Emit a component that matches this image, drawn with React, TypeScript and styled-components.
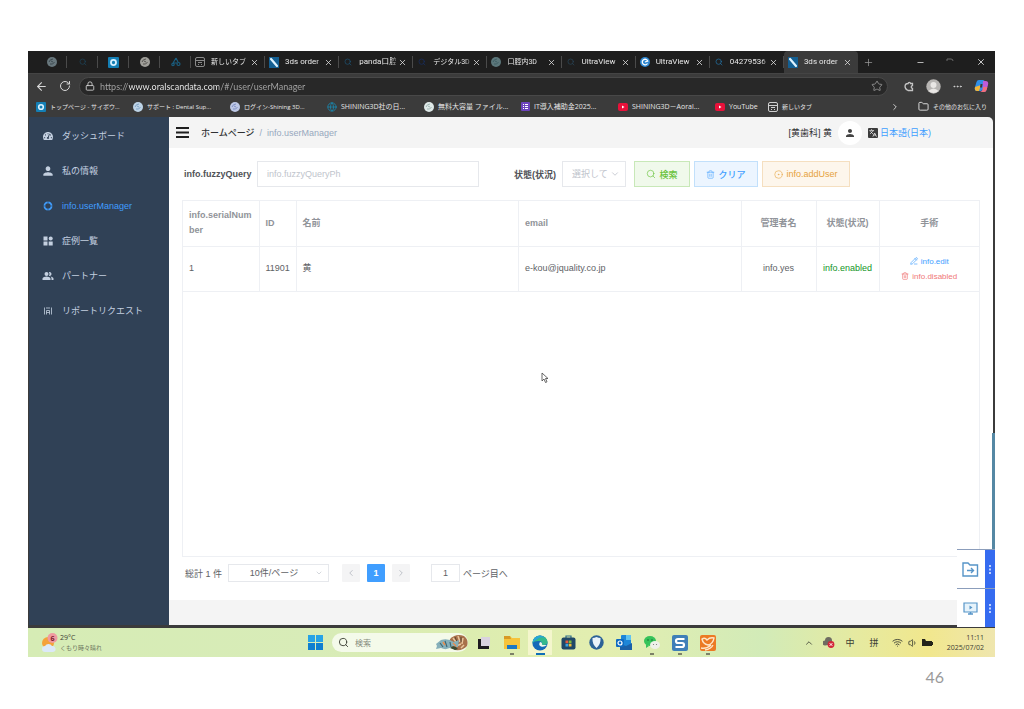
import React from "react";
import styled, { createGlobalStyle, css } from "styled-components";
import {
  ArrowLeft, RotateCw, Lock, Star, X, Plus, Minus, Search, ChevronDown, ChevronLeft,
  ChevronRight, ChevronUp, Folder, Trash2, CircleDot, PencilLine, Wifi, Volume1, Ellipsis,
  Globe, Languages,
} from "lucide-react";
import { FaTachometerAlt } from "react-icons/fa";
import { MdPerson, MdPeopleAlt } from "react-icons/md";

const uiFont = `"Open Sans", "Noto Sans CJK JP", sans-serif`;
const narrowFont = `Roboto, "Noto Sans CJK JP", sans-serif`;
const appFont = `"Liberation Sans", "Noto Sans CJK JP", sans-serif`;

const GlobalStyle = createGlobalStyle`
  *, *::before, *::after { box-sizing: border-box; }
  body { margin: 0; background: #fff; font-family: ${appFont}; font-size: 9px; }
  button, input, select { font: inherit; margin: 0; padding: 0; border: 0; background: none; color: inherit; }
  button { cursor: pointer; }
  a { color: inherit; text-decoration: none; }
  svg { display: block; flex: none; }
`;

const Slide = styled.div`
  min-height: 100vh;
  display: flex;
  flex-direction: column;
  padding: 51px 29px 0 28px;
`;

const Desktop = styled.div`
  position: relative;
  flex: 1;
  display: flex;
  flex-direction: column;
  background: #3b3b3b;
`;

const SlideNumber = styled.footer`
  height: 52px;
  padding: 10px 51px 0 0;
  text-align: right;
  font: 16px/20px Lato, sans-serif;
  color: #9a9a9a;
`;

/* ---------- browser chrome ---------- */

const TabStrip = styled.div`
  display: flex;
  height: 22px;
  background: #1e1e1e;
  color: #e8e8e8;
  font-family: ${narrowFont};
`;

const PinnedTabs = styled.div`
  display: flex;
  padding-left: 8px;
`;

const PinnedTab = styled.button`
  display: grid;
  place-items: center;
  width: 31px;
  background: linear-gradient(#4a4a4a, #4a4a4a) right center / 1px 12px no-repeat;
`;

const Tabs = styled.div`
  flex: 1;
  min-width: 0;
  display: flex;
`;

const Tab = styled.div<{ $active?: boolean }>`
  flex: 1;
  min-width: 0;
  display: flex;
  align-items: center;
  padding: 0 6px 0 4px;
  border-radius: 4px 4px 0 0;
  background: ${p => p.$active ? "#3b3b3b" : "linear-gradient(#4a4a4a, #4a4a4a) right center / 1px 12px no-repeat"};
`;

const TabIcon = styled.span`
  display: grid;
  place-items: center;
  width: 10px;
`;

const TabTitle = styled.span<{ $small?: boolean }>`
  flex: 1;
  min-width: 0;
  margin: 0 2px 0 6px;
  overflow: hidden;
  white-space: nowrap;
  font-size: ${p => p.$small ? 7 : 8}px;
  line-height: 12px;
  mask-image: linear-gradient(90deg, #000 85%, #0006);
`;

const WindowControls = styled.div`
  width: 137px;
  display: flex;
  align-items: center;
  justify-content: space-between;
  padding: 0 9px 0 5px;
  svg:first-child { margin-right: 20px; }
`;

const NavBar = styled.div`
  display: flex;
  align-items: center;
  height: 25px;
  padding: 0 6px 0 7px;
  gap: 11px;
  color: #d8d8d8;
  border-top: 1px solid #444;
`;

const AddressBox = styled.label`
  flex: 1;
  display: flex;
  align-items: center;
  gap: 5px;
  height: 19px;
  margin: 0 5px 0 -3px;
  padding: 0 4px 0 5px;
  border: 1px solid #484848;
  border-radius: 10px;
  background: #282828;
`;

const AddressInput = styled.input`
  flex: 1;
  min-width: 0;
  height: 15px;
  outline: 0;
  font: 9px/15px Lato, sans-serif;
  color: transparent;
  background: linear-gradient(90deg, #a8a8a8 28px, #f4f4f4 28px 119px, #a8a8a8 119px);
  background-clip: text;
`;

const BookmarkBar = styled.nav`
  display: flex;
  align-items: center;
  height: 19px;
  padding: 0 8px 2px;
  color: #e6e6e6;
  font-family: ${uiFont};
`;

const Bookmark = styled.a<{ $w?: number; $small?: boolean }>`
  display: flex;
  align-items: center;
  gap: 4px;
  width: ${p => p.$w ? `${p.$w}px` : "auto"};
  font-size: ${p => p.$small ? 6 : 7}px;
  line-height: 12px;
  white-space: nowrap;
`;

const BookmarkEnd = styled.div`
  display: flex;
  align-items: center;
  gap: 18px;
  margin-left: auto;
`;

/* ---------- application ---------- */

const AppFrame = styled.div`
  flex: 1;
  display: flex;
  padding: 0 2px 3px 1px;
`;

const Sidebar = styled.nav`
  width: 140px;
  padding-top: 1px;
  background: #304156;
`;

const MenuLink = styled.a<{ $active?: boolean }>`
  display: flex;
  align-items: center;
  gap: 9px;
  height: 35px;
  padding-left: 14px;
  white-space: nowrap;
  color: ${p => p.$active ? "#409eff" : "#c4d0e0"};
`;

const MenuIcon = styled.span`
  display: flex;
  align-items: center;
  justify-content: center;
  width: 10px;
`;

const Main = styled.main`
  flex: 1;
  min-width: 0;
  display: flex;
  flex-direction: column;
  background: #f4f4f4;
  border-radius: 0 5px 0 0;
  overflow: hidden;
`;

const Header = styled.header`
  display: flex;
  align-items: center;
  height: 31px;
  padding: 0 62px 0 7px;
  color: #303133;
`;

const Crumbs = styled.nav`
  display: flex;
  align-items: center;
  gap: 5px;
  margin: 0 auto 0 12px;
  color: #97a8be;
  a { color: #303133; font-weight: 500; }
`;

const Avatar = styled.button`
  display: grid;
  place-items: center;
  width: 24px;
  height: 24px;
  margin: 0 6px;
  border-radius: 50%;
  background: #fff;
  color: #444;
`;

const LanguageLink = styled.a`
  display: flex;
  align-items: center;
  gap: 2px;
  color: #409eff;
  svg { background: #3d3d3d; color: #fff; border-radius: 1px; padding: 1px; }
`;

const Card = styled.section`
  flex: 1;
  display: flex;
  flex-direction: column;
  padding: 13px 13px 18px;
  background: #fff;
`;

const PageFoot = styled.div`
  height: 25px;
`;

const Filters = styled.form`
  display: flex;
  align-items: center;
  height: 26px;
  margin-bottom: 13px;
  padding-left: 2px;
`;

const FieldLabel = styled.label`
  width: 73px;
  font-weight: 700;
  color: #505257;
  white-space: nowrap;
`;

const StatusLabel = styled(FieldLabel)`
  width: 48px;
  margin-left: 35px;
`;

const QueryInput = styled.input`
  flex: 0 1 222px;
  min-width: 80px;
  height: 26px;
  padding: 0 9px;
  border: 1px solid #e6e8ec;
  background: #fff;
  &::placeholder { color: #c0c4cc; opacity: 1; }
`;

const SelectBox = styled.span<{ $w: number; $h: number }>`
  display: flex;
  align-items: center;
  justify-content: flex-end;
  width: ${p => p.$w}px;
  height: ${p => p.$h}px;
  padding-right: 5px;
  border: 1px solid #e6e8ec;
  background: #fff;
  color: #c0c4cc;
`;

const Select = styled.select<{ $center?: boolean }>`
  appearance: none;
  flex: 1;
  min-width: 0;
  height: 100%;
  padding-left: 9px;
  outline: 0;
  ${p => p.$center && css`padding-left: 4px; text-align: center; text-align-last: center; color: #606266;`}
`;

const tones = {
  green: ["#67c23a", "#f0f9eb", "#c8e8b8"],
  blue: ["#409eff", "#ecf5ff", "#c2e0fb"],
  amber: ["#e6a23c", "#fdf6ec", "#f5dfc0"],
};

const ActionButton = styled.button<{ $tone: keyof typeof tones; $w: number }>`
  display: flex;
  align-items: center;
  justify-content: center;
  gap: 3px;
  width: ${p => p.$w}px;
  height: 26px;
  margin-left: 4px;
  color: ${p => tones[p.$tone][0]};
  background: ${p => tones[p.$tone][1]};
  border: 1px solid ${p => tones[p.$tone][2]};
  font-weight: 500;
  white-space: nowrap;
`;

const Actions = styled.div`
  display: flex;
  margin-left: 4px;
`;

const TableBox = styled.div`
  flex: 1;
  border: 1px solid #eef0f4;
  margin-bottom: 7px;
`;

const Table = styled.table`
  width: 100%;
  table-layout: fixed;
  border-collapse: collapse;
  color: #606266;
  th, td {
    height: 45px;
    padding: 0 5px 0 6px;
    border-bottom: 1px solid #eef0f4;
    border-right: 1px solid #eef0f4;
    line-height: 15px;
    text-align: left;
    overflow-wrap: anywhere;
  }
  th:last-child, td:last-child { border-right: 0; }
  th { color: #909399; font-weight: 700; }
  th:nth-child(n + 5), td:nth-child(n + 5) { text-align: center; padding: 0; }
`;

const Enabled = styled.span`
  color: #13941f;
`;

const RowAction = styled.button<{ $danger?: boolean }>`
  display: flex;
  align-items: center;
  gap: 3px;
  margin: 0 auto;
  font-size: 8px;
  line-height: 15px;
  color: ${p => p.$danger ? "#f07878" : "#409eff"};
`;

const Pager = styled.div`
  display: flex;
  align-items: center;
  height: 18px;
  padding-left: 3px;
  color: #606266;
  white-space: nowrap;
`;

const PagerTotal = styled.span`
  width: 43px;
`;

const PageButtons = styled.div`
  display: flex;
  gap: 7px;
  margin: 0 21px 0 13px;
`;

const PageButton = styled.button<{ $current?: boolean }>`
  display: grid;
  place-items: center;
  width: 18px;
  height: 18px;
  border-radius: 1px;
  font-weight: 700;
  color: ${p => p.$current ? "#fff" : "#b4b8c0"};
  background: ${p => p.$current ? "#409eff" : "#f4f4f5"};
`;

const JumpInput = styled.input`
  width: 29px;
  height: 18px;
  margin-right: 3px;
  border: 1px solid #e6e8ec;
  text-align: center;
`;

/* ---------- overlays ---------- */

const Dock = styled.div`
  position: absolute;
  right: 0;
  bottom: 30px;
  width: 38px;
  display: flex;
  flex-direction: column;
`;

const DockButton = styled.button`
  display: flex;
  align-items: center;
  height: 39px;
  border-top: 1px solid #8b9dbb;
  background: linear-gradient(90deg, #fff 28px, #356bf0 28px);
  color: #5795c8;
  padding-left: 5px;
  gap: 10px;
`;

const EdgeLine = styled.div`
  position: absolute;
  right: 0;
  bottom: 108px;
  width: 3px;
  height: 116px;
  background: #5588a4;
`;

const Pointer = styled.svg`
  position: absolute;
  left: 513px;
  top: 321px;
`;

/* ---------- taskbar ---------- */

const Taskbar = styled.div`
  display: grid;
  grid-template-columns: 1fr auto 1fr;
  align-items: center;
  height: 29px;
  background: linear-gradient(90deg, #d6ecb5 0%, #d8ecb8 30%, #dcedb0 45%, #e3eeb0 60%, #d2ebb8 76%, #e6eaa0 86%, #f1e78d 93%, #efe6ae 100%);
  font-family: ${uiFont};
  color: #3c4034;
`;

const Weather = styled.div`
  display: flex;
  align-items: center;
  gap: 2px;
  padding-left: 13px;
  font-size: 7px;
  line-height: 10px;
  small { display: block; font-size: 6px; color: #6d7660; }
`;

const TaskGroup = styled.div`
  display: flex;
  align-items: center;
`;

const TaskButton = styled.button<{ $active?: boolean; $running?: boolean }>`
  display: grid;
  place-items: center;
  width: 28px;
  height: 29px;
  background:
    ${p => p.$active ? "linear-gradient(#0f6fb8, #0f6fb8) center 25px / 9px 2px no-repeat," : ""}
    ${p => p.$running ? "linear-gradient(#7c8168, #7c8168) center 25px / 4px 2px no-repeat," : ""}
    ${p => p.$active ? "linear-gradient(#f4f6cd, #f4f6cd) center 2px / 24px 25px no-repeat" : "linear-gradient(transparent, transparent)"};
`;

const TaskSearch = styled.label`
  display: flex;
  align-items: center;
  gap: 6px;
  width: 136px;
  height: 19px;
  margin: 0 2px 0 3px;
  padding-left: 6px;
  border-radius: 10px;
  background: #f4faea;
  input { flex: 1; min-width: 0; outline: 0; font-size: 8px; }
  input::placeholder { color: #858b7c; opacity: 1; }
`;

const Tray = styled.div`
  display: flex;
  align-items: center;
  justify-content: flex-end;
  padding-right: 11px;
  font-size: 9px;
  time { width: 49px; font-size: 7px; line-height: 10px; text-align: right; }
`;

const TrayItem = styled.span<{ $w: number }>`
  display: grid;
  place-items: center;
  width: ${p => p.$w}px;
`;

/* ---------- drawings ---------- */

const Disc = ({ fill, inner = "#9aa7ad", size = 10 }: { fill: string; inner?: string; size?: number }) => (
  <svg width={size} height={size} viewBox="0 0 10 10">
    <circle cx="5" cy="5" r="5" fill={fill} />
    <path d="M2 5Q3 2 6 2M3 7Q6 8 7.500 5M4 4l2 1" stroke={inner} fill="none" strokeWidth="1" />
  </svg>
);

const Cybozu = ({ size = 10 }: { size?: number }) => (
  <svg width={size} height={size} viewBox="0 0 10 10">
    <rect width="10" height="10" rx="1" fill="#147fb5" />
    <circle cx="5" cy="5" r="2.300" fill="none" stroke="#d9f1ff" strokeWidth="1.600" />
  </svg>
);

const PenMark = () => (
  <svg width="10" height="11" viewBox="0 0 10 11">
    <rect width="10" height="11" fill="#145f92" />
    <path d="M2 2l6 7" stroke="#dff3ff" strokeWidth="2.200" strokeLinecap="round" />
  </svg>
);

const TriMark = () => (
  <svg width="10" height="10" viewBox="0 0 10 10" fill="none" stroke="#1a5d7e" strokeWidth="1.200">
    <path d="M5 1L2 6M5 1l2 4M2 6h4" /><circle cx="2" cy="7.500" r="1.200" /><circle cx="7.500" cy="7" r="1.500" />
  </svg>
);

const EMark = () => (
  <svg width="10" height="10" viewBox="0 0 10 10">
    <circle cx="5" cy="5" r="5" fill="#2f87d0" />
    <path d="M7.500 6.500A2.800 2.800 0 1 1 7.700 4L5 5" stroke="#fff" strokeWidth="1.300" fill="none" />
  </svg>
);

const Tube = () => (
  <svg width="10" height="8" viewBox="0 0 10 8">
    <rect width="10" height="8" rx="2" fill="#e8113a" /><path d="M4 2.500v3L6.500 4z" fill="#fff" />
  </svg>
);

const FormMark = () => (
  <svg width="9" height="9" viewBox="0 0 9 9">
    <rect width="9" height="9" rx="1" fill="#6d43bd" />
    <path d="M2 2.500h1M4 2.500h3M2 4.500h1M4 4.500h3M2 6.500h1M4 6.500h3" stroke="#fff" strokeWidth="1" />
  </svg>
);

const NewTabMark = ({ color }: { color: string }) => (
  <svg width="10" height="10" viewBox="0 0 10 10" fill="none" stroke={color} strokeWidth="1">
    <rect x=".5" y=".5" width="9" height="9" rx="1.500" /><path d="M.5 3.500h9M3 5.500h4M3 7.500h1M6 7.500h1" />
  </svg>
);

const ExtensionIcon = () => (
  <svg width="11" height="11" viewBox="0 0 11 11" fill="none" stroke="#c4c4c4" strokeWidth="1.300">
    <path d="M8.500 4V2.500H6.500a1.200 1.200 0 0 0-2.400 0Q1.500 2.300 1 5q0 3.500 3 4.500h4.500V7.300a1.300 1.300 0 0 1 0-2.600z" />
  </svg>
);

const Copilot = () => (
  <svg width="15" height="14" viewBox="0 0 15 14">
    <path d="M5 1h4q1.500 0 2 2l-2 7q-.5 2-2.500 2H3Q0 12 1 8l1.500-5Q3 1 5 1z" fill="#2f8fe8" />
    <path d="M1 8q-.8 4 2 4h2l2-6z" fill="#f0b53a" />
    <path d="M9 2h2.500Q15 2 14 6l-1.500 5q-.5 2-2.500 2H6q2 0 2.500-2z" fill="#c05bd8" />
    <path d="M13.300 8l-.8 3q-.5 2-2.500 2H6q2 0 2.500-2l.6-3z" fill="#f2707a" />
    <path d="M6.500 5h2L8 8.500H6z" fill="#3b3b3b" />
  </svg>
);

const RingIcon = () => (
  <svg width="10" height="10" viewBox="0 0 10 10" fill="none" stroke="currentColor">
    <circle cx="5" cy="5" r="3.600" strokeWidth="1.700" />
    <path d="M5 0v2M5 8v2M0 5h2M8 5h2" stroke="#304156" strokeWidth=".6" />
  </svg>
);

const TilesIcon = () => (
  <svg width="10" height="10" viewBox="0 0 10 10" fill="currentColor">
    <rect x=".5" y=".5" width="4" height="4" /><circle cx="7.700" cy="2.500" r="2" />
    <rect x=".5" y="5.500" width="4" height="4" /><rect x="5.700" y="5.500" width="4" height="4" />
  </svg>
);

const ReportIcon = () => (
  <svg width="10" height="10" viewBox="0 0 10 10" fill="none" stroke="currentColor" strokeWidth=".8">
    <path d="M1.500 1.500v7M8.500 1.500v7M3 2h4M3.500 4.500h3M3.500 6.500h3M3.500 4.500v4M6.500 4.500v4" />
  </svg>
);

const Hamburger = () => (
  <svg width="13" height="11" viewBox="0 0 13 11" stroke="#1f1f1f" strokeWidth="2">
    <path d="M0 1h13M0 5.500h13M0 10h13" />
  </svg>
);

const FolderArrow = () => (
  <svg width="17" height="17" viewBox="0 0 17 17" fill="none" stroke="currentColor" strokeWidth="1.400">
    <path d="M1 2h5l2 2h7.500v11H1z" /><path d="M5 9.500h6.500M9 7l2.500 2.500L9 12" />
  </svg>
);

const ScreenPlay = () => (
  <svg width="17" height="17" viewBox="0 0 17 17" fill="none" stroke="currentColor" strokeWidth="1.200">
    <path d="M2 3h13v9H2z" fill="#e6f3fb" /><path d="M7.500 5.500v4L10.500 7.500z" fill="currentColor" stroke="none" />
    <path d="M6 14h5M8.500 12v2" strokeWidth="1.600" />
  </svg>
);

const Grip = () => (
  <svg width="2" height="9" viewBox="0 0 2 9" fill="#bcd0ff">
    <rect width="2" height="2" /><rect y="3.500" width="2" height="2" /><rect y="7" width="2" height="2" />
  </svg>
);

const WeatherIcon = () => (
  <svg width="17" height="20" viewBox="0 0 17 20">
    <circle cx="7" cy="10" r="6" fill="#f4a23a" />
    <path d="M4 19a3 3 0 0 1 0-6 4 4 0 0 1 7 0 3 3 0 0 1 1 6z" fill="#dce9f8" />
    <circle cx="11.500" cy="5" r="5" fill="#f09aa0" />
    <text x="11.500" y="7.500" fontSize="7" fontWeight="700" textAnchor="middle" fill="#7d1a2b">6</text>
  </svg>
);

const WindowsLogo = () => (
  <svg width="15" height="15" viewBox="0 0 15 15">
    <path d="M0 0h7v7H0zM8 0h7v7H8z" fill="#27a3e6" /><path d="M0 8h7v7H0zM8 8h7v7H8z" fill="#0f7fd0" />
  </svg>
);

const FishArt = () => (
  <svg width="32" height="17" viewBox="0 0 32 17">
    <path d="M14 5q6-6 14-3 5 4 3 10-4 5-12 4-6-4-5-11z" fill="#a8704a" />
    <path d="M17 4l3 4M22 2l2 6M27 4l-1 6M20 12l5-2M28 11l-3 3" stroke="#e8c49c" strokeWidth="1.500" />
    <path d="M19 3l3 7M25 3v5" stroke="#5c4632" strokeWidth="1" />
    <path d="M0 10l5-4q7-2 13 2l5-2-1 7-5-1q-6 5-12 2l-5 1 1-3z" fill="#86b0ba" />
    <path d="M4 9l3 4M9 7l2 6M14 8l1 5" stroke="#3d6875" strokeWidth="1.200" />
    <path d="M7 8l2 3M17 9l3 3" stroke="#ec8c4a" strokeWidth="1.400" />
    <path d="M14 14q4-4 8 1l-3 1z" fill="#394a32" />
  </svg>
);

const TaskViewIcon = () => (
  <svg width="14" height="14" viewBox="0 0 14 14">
    <rect x="4" y="1" width="9" height="9" fill="#d9d2de" /><path d="M1 3h3v7h8v3H1z" fill="#1e1b20" />
  </svg>
);

const ExplorerIcon = () => (
  <svg width="16" height="15" viewBox="0 0 16 15">
    <path d="M0 1h6l2 2h8v11H0z" fill="#f6c33c" /><path d="M0 1h6l1 3H0z" fill="#d79a26" />
    <path d="M3 14v-4h10v4z" fill="#1c77c4" />
  </svg>
);

const EdgeIcon = () => (
  <svg width="16" height="16" viewBox="0 0 16 16">
    <circle cx="8" cy="8" r="7.600" fill="#1569b8" />
    <path d="M.5 8Q1 1 8 .4 15 1 15.600 7q0 3-3.600 3-2.500 0-2-1.500Q10 5.500 6 6 2 6.200.5 8z" fill="#35b98c" />
    <path d="M.5 8Q1 1 8 .4 11 .6 13 3 8 1 4 5 1.500 6 .5 8z" fill="#2aa5d8" />
    <path d="M8 7q2 0 2 1.500Q9.500 10 12 10h3q-3 2.500-6 1.500Q6 10 8 7z" fill="#eef8ea" />
  </svg>
);

const StoreIcon = () => (
  <svg width="15" height="15" viewBox="0 0 15 15">
    <path d="M5 3V1h5v2" fill="none" stroke="#2c6d8a" strokeWidth="1.200" />
    <rect x=".5" y="2.500" width="14" height="12" rx="2" fill="#204867" />
    <path d="M4.500 5.500h2.700v2.700H4.500z" fill="#e85a3c" /><path d="M7.800 5.500h2.700v2.700H7.800z" fill="#82bd3e" />
    <path d="M4.500 8.800h2.700v2.700H4.500z" fill="#35a5e6" /><path d="M7.800 8.800h2.700v2.700H7.800z" fill="#f5bd35" />
  </svg>
);

const ShieldIcon = () => (
  <svg width="15" height="15" viewBox="0 0 15 15">
    <circle cx="7.500" cy="7.500" r="7.200" fill="#2c6297" />
    <path d="M7.500 2q2 1 4 1 .5 6-4 10Q3 9 3.500 3q2 0 4-1z" fill="#e9f2fa" />
  </svg>
);

const OutlookIcon = () => (
  <svg width="16" height="15" viewBox="0 0 16 15">
    <rect x="5" y="0" width="10" height="14" rx="1" fill="#1d86d8" /><path d="M10 0h5v5h-5z" fill="#5fc3f2" />
    <path d="M4 9l6 2 6-3v7H4z" fill="#1a60a8" /><rect x="0" y="4" width="8" height="8" rx="1" fill="#0f6ac0" />
    <circle cx="4" cy="8" r="2" fill="none" stroke="#fff" strokeWidth="1.200" />
  </svg>
);

const WeChatIcon = () => (
  <svg width="16" height="14" viewBox="0 0 16 14">
    <ellipse cx="6" cy="5" rx="6" ry="5" fill="#35c35a" /><path d="M2 8v4l3-2z" fill="#35c35a" />
    <circle cx="4" cy="4" r=".8" fill="#176b32" /><circle cx="8" cy="4" r=".8" fill="#176b32" />
    <ellipse cx="11" cy="9" rx="5" ry="4" fill="#eef1ea" /><circle cx="9.500" cy="8.500" r=".6" fill="#777" /><circle cx="12.500" cy="8.500" r=".6" fill="#777" />
  </svg>
);

const SIcon = () => (
  <svg width="16" height="16" viewBox="0 0 16 16">
    <rect width="16" height="16" rx="2" fill="#3f7fb8" />
    <path d="M12.500 4H6Q4 4 4 6t2 2h4q2 0 2 2t-2 2H3.500" fill="none" stroke="#fff" strokeWidth="2.200" />
  </svg>
);

const OrangeIcon = () => (
  <svg width="16" height="16" viewBox="0 0 16 16">
    <rect width="16" height="16" rx="2" fill="#ec7a24" />
    <path d="M2 4q3-2 5 1 3-3 7-2-1 6-6 7Q3 9 2 4zM1 13q6 1 10-3M5 15q6-1 8-5" fill="none" stroke="#fde6c8" strokeWidth="1.400" />
  </svg>
);

const CloudBlocked = () => (
  <svg width="12" height="11" viewBox="0 0 12 11">
    <path d="M2 8.500a2.500 2.500 0 0 1 0-5 3.500 3.500 0 0 1 7 0v4z" fill="#6f6c62" />
    <circle cx="8" cy="7.500" r="3.400" fill="#d3273a" /><path d="M6.700 6.200l2.600 2.600M9.300 6.200L6.700 8.800" stroke="#fff" />
  </svg>
);

const BatteryIcon = () => (
  <svg width="12" height="9" viewBox="0 0 12 9">
    <path d="M1 1h3l1 2h6v1h1v3h-1v1H1z" fill="#24241a" />
  </svg>
);

/* ---------- data ---------- */

const tabs = [
  { title: "新しいタブ", icon: <NewTabMark color="#8a8a8a" />, small: true },
  { title: "3ds order", icon: <PenMark /> },
  { title: "pandaロ腔", icon: <Search size={8} color="#1d5577" /> },
  { title: "デジタル3D", icon: <Search size={8} color="#172f66" />, small: true },
  { title: "口腔内3D", icon: <Disc fill="#5c777b" inner="#405f65" />, small: true },
  { title: "UltraView", icon: <Search size={8} color="#28475b" /> },
  { title: "UltraView", icon: <EMark /> },
  { title: "04279536", icon: <Search size={8} color="#2277ad" /> },
  { title: "3ds order", icon: <PenMark />, active: true },
];

const menu = [
  { label: "ダッシュボード", icon: <FaTachometerAlt size={10} /> },
  { label: "私の情報", icon: <MdPerson size={14} /> },
  { label: "info.userManager", icon: <RingIcon />, active: true },
  { label: "症例一覧", icon: <TilesIcon /> },
  { label: "パートナー", icon: <MdPeopleAlt size={12} /> },
  { label: "リポートリクエスト", icon: <ReportIcon /> },
];

export default function App() {
  return (
    <Slide>
      <GlobalStyle />
      <Desktop>
        <TabStrip>
          <PinnedTabs>
            <PinnedTab aria-label="Globe"><Disc fill="#68777d" inner="#3d4a50" /></PinnedTab>
            <PinnedTab aria-label="Search"><Search size={8} color="#1c455c" /></PinnedTab>
            <PinnedTab aria-label="Cybozu"><Cybozu size={11} /></PinnedTab>
            <PinnedTab aria-label="Chat"><Disc fill="#a09f9a" inner="#54534f" /></PinnedTab>
            <PinnedTab aria-label="Shining"><TriMark /></PinnedTab>
          </PinnedTabs>
          <Tabs>
            {tabs.map((t, i) => (
              <Tab key={i} $active={t.active}>
                <TabIcon>{t.icon}</TabIcon>
                <TabTitle $small={t.small}>{t.title}</TabTitle>
                <button aria-label="閉じる"><X size={9} /></button>
              </Tab>
            ))}
          </Tabs>
          <WindowControls>
            <Plus size={11} color="#a0a0a0" strokeWidth={1.500} />
            <Minus size={9} />
            <svg width="8" height="8" viewBox="0 0 8 8" fill="none" stroke="#6a6a6a"><path d="M1 3V1h2M3 1h2Q7 1 7 3" /></svg>
            <X size={10} />
          </WindowControls>
        </TabStrip>

        <NavBar>
          <button aria-label="戻る"><ArrowLeft size={13} /></button>
          <button aria-label="更新"><RotateCw size={12} /></button>
          <AddressBox>
            <Lock size={10} />
            <AddressInput aria-label="アドレス" defaultValue="https://www.oralscandata.com/#/user/userManager" />
            <Star size={12} color="#8a8a8a" />
          </AddressBox>
          <ExtensionIcon />
          <svg width="15" height="15" viewBox="0 0 15 15"><circle cx="7.500" cy="7.500" r="7.200" fill="#b7b5b3" /><circle cx="7.500" cy="6" r="3" fill="#e9e7e5" /><path d="M2.500 12q5-5 10 0-5 4-10 0z" fill="#e9e7e5" /></svg>
          <Ellipsis size={11} />
          <Copilot />
        </NavBar>

        <BookmarkBar>
          <Bookmark href="#" $w={97} $small><Cybozu />トップページ - サイボウ...</Bookmark>
          <Bookmark href="#" $w={97} $small><Disc fill="#bdd3e6" inner="#7fa2c4" />サポート : Dental Sup...</Bookmark>
          <Bookmark href="#" $w={97} $small><Disc fill="#bdc8e6" inner="#7f8fc4" />ログイン-Shining 3D...</Bookmark>
          <Bookmark href="#" $w={97}><Globe size={10} color="#1b87ad" />SHINING3D社の日...</Bookmark>
          <Bookmark href="#" $w={97}><Disc fill="#dfe9e8" inner="#9db5b2" />無料大容量 ファイル...</Bookmark>
          <Bookmark href="#" $w={97}><FormMark />IT導入補助金2025...</Bookmark>
          <Bookmark href="#" $w={97}><Tube />SHINING3D－Aoral...</Bookmark>
          <Bookmark href="#" $w={53}><Tube />YouTube</Bookmark>
          <Bookmark href="#" $small><NewTabMark color="#d0d0d0" />新しいタブ</Bookmark>
          <BookmarkEnd>
            <ChevronRight size={10} />
            <Bookmark href="#" $small><Folder size={11} />その他のお気に入り</Bookmark>
          </BookmarkEnd>
        </BookmarkBar>

        <AppFrame>
          <Sidebar>
            {menu.map(m => (
              <MenuLink href="#" key={m.label} $active={m.active}>
                <MenuIcon>{m.icon}</MenuIcon>{m.label}
              </MenuLink>
            ))}
          </Sidebar>
          <Main>
            <Header>
              <button aria-label="メニュー"><Hamburger /></button>
              <Crumbs><a href="#">ホームページ</a><span>/</span><span>info.userManager</span></Crumbs>
              <span>[黄歯科] 黄</span>
              <Avatar aria-label="アカウント"><MdPerson size={12} /></Avatar>
              <LanguageLink href="#"><Languages size={10} />日本語(日本)</LanguageLink>
            </Header>
            <Card>
              <Filters onSubmit={e => e.preventDefault()}>
                <FieldLabel htmlFor="query">info.fuzzyQuery</FieldLabel>
                <QueryInput id="query" placeholder="info.fuzzyQueryPh" />
                <StatusLabel htmlFor="status">状態(状況)</StatusLabel>
                <SelectBox $w={64} $h={26}>
                  <Select id="status"><option>選択して</option></Select>
                  <ChevronDown size={10} />
                </SelectBox>
                <Actions>
                  <ActionButton $tone="green" $w={56}><Search size={10} strokeWidth={1.500} />検索</ActionButton>
                  <ActionButton $tone="blue" $w={64} type="reset"><Trash2 size={9} strokeWidth={1.500} />クリア</ActionButton>
                  <ActionButton $tone="amber" $w={88} type="button"><CircleDot size={9} strokeWidth={1.500} />info.addUser</ActionButton>
                </Actions>
              </Filters>
              <TableBox>
                <Table>
                  <colgroup>
                    <col style={{ width: 76 }} /><col style={{ width: 37 }} /><col /><col />
                    <col style={{ width: 75 }} /><col style={{ width: 63 }} /><col style={{ width: 100 }} />
                  </colgroup>
                  <thead>
                    <tr><th>info.serialNumber</th><th>ID</th><th>名前</th><th>email</th><th>管理者名</th><th>状態(状況)</th><th>手術</th></tr>
                  </thead>
                  <tbody>
                    <tr>
                      <td>1</td><td>11901</td><td>黄</td><td>e-kou@jquality.co.jp</td><td>info.yes</td>
                      <td><Enabled>info.enabled</Enabled></td>
                      <td>
                        <RowAction><PencilLine size={8} />info.edit</RowAction>
                        <RowAction $danger><Trash2 size={8} />info.disabled</RowAction>
                      </td>
                    </tr>
                  </tbody>
                </Table>
              </TableBox>
              <Pager>
                <PagerTotal>総計 1 件</PagerTotal>
                <SelectBox $w={101} $h={18}>
                  <Select $center aria-label="件数"><option>10件/ページ</option></Select>
                  <ChevronDown size={8} />
                </SelectBox>
                <PageButtons>
                  <PageButton aria-label="前へ"><ChevronLeft size={10} /></PageButton>
                  <PageButton $current>1</PageButton>
                  <PageButton aria-label="次へ"><ChevronRight size={10} /></PageButton>
                </PageButtons>
                <JumpInput id="jump" defaultValue="1" />
                <label htmlFor="jump">ページ目へ</label>
              </Pager>
            </Card>
            <PageFoot />
          </Main>
        </AppFrame>

        <Taskbar>
          <Weather><WeatherIcon /><div>29°C<small>くもり時々晴れ</small></div></Weather>
          <TaskGroup>
            <TaskButton aria-label="スタート"><WindowsLogo /></TaskButton>
            <TaskSearch><Search size={11} /><input placeholder="検索" aria-label="検索" /><FishArt /></TaskSearch>
            <TaskButton aria-label="Task view"><TaskViewIcon /></TaskButton>
            <TaskButton aria-label="Explorer" $running><ExplorerIcon /></TaskButton>
            <TaskButton aria-label="Edge" $active><EdgeIcon /></TaskButton>
            <TaskButton aria-label="Store"><StoreIcon /></TaskButton>
            <TaskButton aria-label="Shield"><ShieldIcon /></TaskButton>
            <TaskButton aria-label="Outlook"><OutlookIcon /></TaskButton>
            <TaskButton aria-label="WeChat" $running><WeChatIcon /></TaskButton>
            <TaskButton aria-label="S" $running><SIcon /></TaskButton>
            <TaskButton aria-label="Capture" $running><OrangeIcon /></TaskButton>
          </TaskGroup>
          <Tray>
            <TrayItem $w={20}><ChevronUp size={10} /></TrayItem>
            <TrayItem $w={20}><CloudBlocked /></TrayItem>
            <TrayItem $w={22}>中</TrayItem>
            <TrayItem $w={26}>拼</TrayItem>
            <TrayItem $w={20}><Wifi size={11} /></TrayItem>
            <TrayItem $w={12}><Volume1 size={10} /></TrayItem>
            <TrayItem $w={16}><BatteryIcon /></TrayItem>
            <time>11:11<br />2025/07/02</time>
          </Tray>
        </Taskbar>

        <EdgeLine />
        <Dock>
          <DockButton aria-label="フォルダー"><FolderArrow /><Grip /></DockButton>
          <DockButton aria-label="再生"><ScreenPlay /><Grip /></DockButton>
        </Dock>
        <Pointer width="8" height="12" viewBox="0 0 8 12">
          <path d="M1 1v8l2-2 1.500 3.500 1.500-.7L4.500 6.500H7z" fill="#fff" stroke="#444" strokeWidth=".8" />
        </Pointer>
      </Desktop>
      <SlideNumber>46</SlideNumber>
    </Slide>
  );
}
